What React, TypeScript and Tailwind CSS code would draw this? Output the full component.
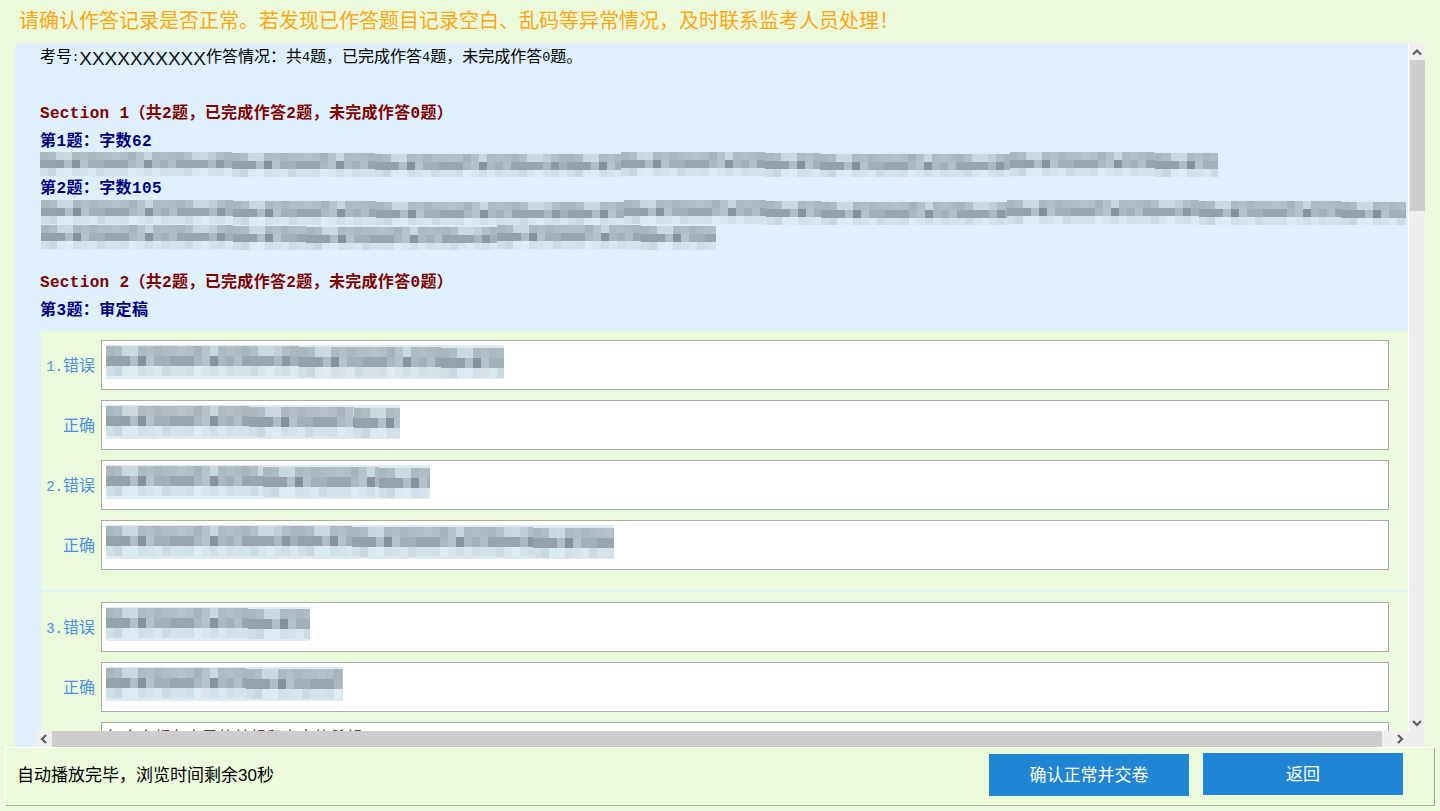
import React from "react";

const TOP = ["#a8b6be","#aebcc4","#c8d8e0","#cbdae2","#abbac2","#b0bfc7","#a9b8c0","#aebdc5","#b0bec6","#b4c2ca","#b0bec6","#a5b4bc","#b4c3cb","#c8d8e0","#acbac2","#b0bec6","#acbbc3","#a8b7bf","#b0c0c8","#c8d8e0","#cbdae2","#c0cfd7","#b0bec6","#a8b6be"];
const MID = ["#94a2ab","#94a2ab","#93a1aa","#b0bfc7","#84929b","#b4c3cb","#a2b1b9","#a2b0b9","#98a6af","#98a6af","#98a6af","#aab9c1","#b4c3cb","#87959e","#aab9c1","#a2b0b9","#b0bfc7","#98a6af","#98a6af","#98a6af","#98a6af","#aab9c1","#8b99a2","#a2b0b9"];
const BOT = ["#cfdfe8","#c8d8e2","#dbe9f2","#dcebf4","#d0e0ea","#d3e2eb","#d8e7f0","#cbdbe4","#d3e2eb","#d3e2eb","#d0e0ea","#dcebf4","#d6e5ee","#d0e0ea","#d8e7f0","#d0e0ea","#d3e2eb","#d3e2eb","#cbdbe4","#d6e5ee","#dcebf4","#d3e2eb","#cfdfe8","#d8e7f0"];

function Mosaic({ width, height, stops, row, top = 0 }: { width: number; height: number; stops: number[]; row: number; top?: number }) {
  const edges = [0, ...stops.filter((s) => s < width), width];
  const rects: React.ReactElement[] = [];
  for (let s = 0; s < edges.length - 1; s++) {
    const dy = s % 3 === 0 ? 0 : s % 3 === 1 ? 1 : 2;
    for (let x = edges[s], i = 0; x < edges[s + 1]; x += 8, i++) {
      const w = Math.min(8, edges[s + 1] - x);
      const k = i % 24;
      [TOP, MID, BOT].forEach((arr, r) => {
        rects.push(<rect key={`${s}-${i}-${r}`} x={x} y={top + dy + r * row} width={w} height={row} fill={arr[k]} />);
      });
    }
  }
  return (
    <svg width={width} height={height} className="block" shapeRendering="crispEdges">
      <rect x={0} y={0} width={width} height={height} fill="#dcecf6" />
      {rects}
    </svg>
  );
}

function Chevron({ points }: { points: string }) {
  return (
    <svg width="16" height="16" viewBox="0 0 16 16" className="block">
      <polyline points={points} fill="none" stroke="#5f5f5f" strokeWidth="2.2" />
    </svg>
  );
}

function Row({ num, label, width, stops, children }: { num?: string; label?: string; width?: number; stops?: number[]; children?: React.ReactNode }) {
  return (
    <div className="flex mb-[10px] h-[50px] items-stretch">
      <div className="w-[54px] shrink-0 flex items-center justify-end pt-[4px] text-[16px] text-[#4a8fe3] whitespace-pre">
        {num ? <span className="text-[14px]">{num}</span> : null}
        {label}
      </div>
      <div className="ml-[6px] w-[1288px] shrink-0 bg-white border border-[#a9a9a9] pl-[4px] pt-[4px] overflow-hidden">
        {width && stops ? <Mosaic width={width} height={34} stops={stops} row={10} top={1} /> : children}
      </div>
    </div>
  );
}

export default function App() {
  return (
    <div
      className="w-[1440px] h-[811px] overflow-hidden flex flex-col bg-[#ecfadc]"
      style={{ fontFamily: '"Liberation Mono","Noto Sans CJK SC",sans-serif' }}
    >
      <header className="h-[43px] shrink-0 pl-[19px] pb-[2px] flex items-center text-[20px] text-[#ffa512]" style={{ fontFamily: '"Liberation Sans","Noto Sans CJK SC",sans-serif' }}>
        请确认作答记录是否正常。若发现已作答题目记录空白、乱码等异常情况，及时联系监考人员处理！
      </header>

      <main className="h-[704px] shrink-0 ml-[15px] w-[1410px] flex flex-col">
        <div className="h-[688px] flex">
          <div className="w-[1393px] shrink-0 bg-[#ddf0fb] overflow-hidden">
            <div className="pl-[25px] pt-[2px] h-[28px] flex items-center text-[16px] text-black leading-none whitespace-pre">
              考号<span className="text-[12px]">:</span><span className="text-[19px] text-[#111]" style={{ fontFamily: '"Liberation Sans",sans-serif' }}>XXXXXXXXXX</span>作答情况：共<span className="text-[13.5px]">4</span>题，已完成作答<span className="text-[13.5px]">4</span>题，未完成作答<span className="text-[13.5px]">0</span>题。
            </div>
            <div className="pl-[25px] pt-[2px] mt-[28px] h-[28px] flex items-center text-[16px] font-bold text-[#800000] whitespace-pre tracking-[0.33px]">Section 1（共2题，已完成作答2题，未完成作答0题）</div>
            <div className="pl-[25px] pt-[2px] mt-[3px] h-[22px] flex items-center text-[16px] font-bold text-[#000080] tracking-[0.4px]">第1题：字数62</div>
            <div className="ml-[25px]">
              <Mosaic width={1178} height={25} row={8} stops={[192, 335, 581, 725, 780, 970, 1115]} />
            </div>
            <div className="pl-[25px] pt-[2px] h-[22px] flex items-center text-[16px] font-bold text-[#000080] tracking-[0.4px]">第2题：字数105</div>
            <div className="ml-[26px] mt-[1px]">
              <Mosaic width={1365} height={25} row={8} stops={[192, 335, 583, 725, 780, 966, 1158, 1300]} />
            </div>
            <div className="ml-[26px]">
              <Mosaic width={675} height={25} row={8} stops={[192, 265, 456, 600]} />
            </div>
            <div className="pl-[25px] pt-[2px] mt-[18px] h-[28px] flex items-center text-[16px] font-bold text-[#800000] whitespace-pre tracking-[0.33px]">Section 2（共2题，已完成作答2题，未完成作答0题）</div>
            <div className="pl-[25px] pt-[2px] mt-[3px] h-[22px] flex items-center text-[16px] font-bold text-[#000080] tracking-[0.4px]">第3题：审定稿</div>

            <div className="ml-[26px] mt-[10px] bg-[#ecfadc] h-[259px] pt-[9px]">
              <Row num="1." label="错误" width={398} stops={[193, 335]} />
              <Row label="正确" width={294} stops={[143, 248]} />
              <Row num="2." label="错误" width={324} stops={[157, 273]} />
              <Row label="正确" width={508} stops={[246, 427]} />
            </div>
            <div className="ml-[26px] mt-[2px] bg-[#ecfadc] h-[200px] pt-[10px]">
              <Row num="3." label="错误" width={204} stops={[142]} />
              <Row label="正确" width={237} stops={[140]} />
              <Row label="">
                <div className="mt-[2px] text-[16px] text-[#5a3a3a] leading-[20px] whitespace-nowrap">每个人都有自己的梦想和未来的希望</div>
              </Row>
            </div>
          </div>

          <div className="w-[1px] shrink-0 bg-white" />
          <div className="w-[16px] shrink-0 bg-[#efefef] flex flex-col items-center">
            <div className="h-[17px] flex items-center justify-center"><Chevron points="4,10.5 8,6.5 12,10.5" /></div>
            <div className="h-[151px] w-[15px] bg-[#cdcdcd]" />
            <div className="flex-1" />
            <div className="h-[17px] flex items-center justify-center"><Chevron points="4,6 8,10 12,6" /></div>
          </div>
        </div>

        <div className="h-[16px] flex">
          <div className="w-[21px] shrink-0 bg-[#ddf0fb]" />
          <div className="w-[16px] shrink-0 bg-[#efefef] flex items-center justify-center"><Chevron points="10,4 6,8 10,12" /></div>
          <div className="w-[1330px] shrink-0 bg-[#cdcdcd]" />
          <div className="flex-1 bg-[#efefef] flex items-center pl-[10px]"><Chevron points="6,4 10,8 6,12" /></div>
        </div>
      </main>

      <footer
        className="ml-[5px] w-[1430px] h-[59px] shrink-0 border-t border-l border-t-white border-l-white border-b border-r border-b-[#a9a9a9] border-r-[#a9a9a9] flex items-start text-[17px] text-black pl-[11px]"
        style={{ fontFamily: '"Liberation Sans","Noto Sans CJK SC",sans-serif' }}
      >
        <span className="flex-1 self-center mb-[1px]">自动播放完毕，浏览时间剩余30秒</span>
        <button className="w-[200px] h-[42px] mt-[6px] pt-[2px] bg-[#1f85d4] text-white">确认正常并交卷</button>
        <button className="w-[200px] h-[42px] mt-[5px] pt-[2px] ml-[14px] mr-[31px] bg-[#1f85d4] text-white">返回</button>
      </footer>
    </div>
  );
}
